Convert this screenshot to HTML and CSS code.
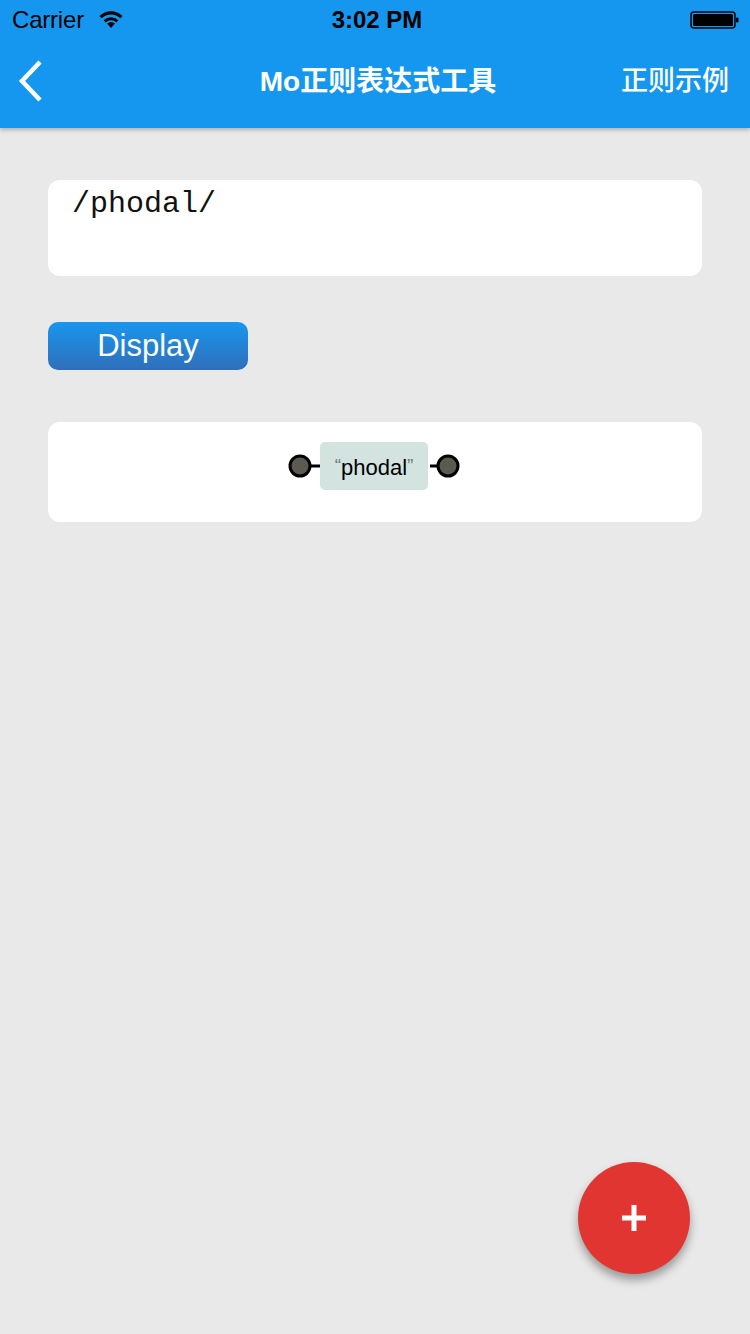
FILE: index.html
```html
<!DOCTYPE html>
<html>
<head>
<meta charset="utf-8">
<link rel="stylesheet" href="styles.css">
</head>
<body>
<div class="screen">
  <header class="topbar">
    <div class="status">
      <div class="status-left">
        <span class="carrier">Carrier</span>
        <svg class="wifi" width="26" height="20" viewBox="0 0 26 20">
          <path d="M13 19 L9 14.5 A6 6 0 0 1 17 14.5 Z" fill="#000"/>
          <path d="M5.6 11.2 A10.5 10.5 0 0 1 20.4 11.2 L18.3 13.4 A7.5 7.5 0 0 0 7.7 13.4 Z" fill="#000"/>
          <path d="M1.5 7 A16.5 16.5 0 0 1 24.5 7 L22.4 9.2 A13.5 13.5 0 0 0 3.6 9.2 Z" fill="#000"/>
        </svg>
      </div>
      <span class="time">3:02 PM</span>
      <div class="status-right">
        <svg width="50" height="20" viewBox="0 0 50 20">
          <rect x="1" y="2" width="44" height="16" rx="3" fill="none" stroke="#000" stroke-width="1.5"/>
          <rect x="3" y="4" width="40" height="12" rx="1.5" fill="#000"/>
          <rect x="46" y="7.5" width="2.5" height="5" rx="1" fill="#000"/>
        </svg>
      </div>
    </div>
    <nav class="navbar">
      <svg class="back" width="30" height="44" viewBox="0 0 30 44">
        <path d="M25 3 L7 22 L25 41" fill="none" stroke="#fff" stroke-width="4.5"/>
      </svg>
      <h1 class="title">Mo正则表达式工具</h1>
      <span class="action">正则示例</span>
    </nav>
  </header>

  <main class="content">
    <div class="input-card">/phodal/</div>
    <button class="display-btn">Display</button>
    <div class="diagram-card">
      <svg width="180" height="56" viewBox="0 0 180 56">
        <line x1="14" y1="24" x2="34" y2="24" stroke="#000" stroke-width="3"/>
        <line x1="142" y1="24" x2="164" y2="24" stroke="#000" stroke-width="3"/>
        <rect x="32" y="0" width="108" height="48" rx="5" fill="#d3e4e0"/>
        <circle cx="12" cy="24" r="10" fill="#5c5a50" stroke="#000" stroke-width="3"/>
        <circle cx="160" cy="24" r="10" fill="#5c5a50" stroke="#000" stroke-width="3"/>
        <text x="86" y="33" text-anchor="middle" font-family="Liberation Sans, Arial, sans-serif" font-size="22" fill="#000"><tspan fill="#777" font-size="19" dy="-3">“</tspan><tspan dy="3">phodal</tspan><tspan fill="#777" font-size="19" dy="-3">”</tspan></text>
      </svg>
    </div>
  </main>

  <button class="fab" aria-label="add">
    <svg width="28" height="28" viewBox="0 0 28 28">
      <rect x="11.5" y="1" width="5" height="26" fill="#fff"/>
      <rect x="2" y="11.5" width="24" height="5" fill="#fff"/>
    </svg>
  </button>
</div>
</body>
</html>
```

FILE: styles.css
```css
* { box-sizing: border-box; }
html, body { margin: 0; padding: 0; }
body {
  width: 750px;
  height: 1334px;
  background: #e9e9e9;
  font-family: "Liberation Sans", Arial, "Noto Sans CJK SC", sans-serif;
  overflow: hidden;
}
.screen {
  position: relative;
  width: 750px;
  height: 1334px;
}
.topbar {
  background: #1697ef;
  box-shadow: 0 2px 4px rgba(0,0,0,0.25);
  position: relative;
  z-index: 1;
}
.status {
  height: 40px;
  display: flex;
  align-items: center;
  justify-content: space-between;
  padding: 0 12px;
  color: #000;
  position: relative;
}
.status-left { display: flex; align-items: center; gap: 14px; width: 150px; }
.carrier { font-size: 24px; letter-spacing: -0.2px; }
.wifi { margin-top: -2px; }
.time {
  font-size: 24px;
  font-weight: bold;
  position: absolute;
  left: 0; right: 0;
  text-align: center;
  pointer-events: none;
  padding-left: 4px;
}
.status-right { width: 150px; display: flex; justify-content: flex-end; margin-right: -2px; }
.navbar {
  height: 88px;
  display: flex;
  align-items: center;
  justify-content: space-between;
  padding: 0 21px 6px 15px;
  position: relative;
  color: #fff;
}
.title {
  margin: 0;
  position: absolute;
  left: 0; right: 0;
  top: 0;
  line-height: 84px;
  text-align: center;
  font-size: 28px;
  font-weight: bold;
  font-family: "Liberation Sans", "Noto Sans CJK SC", sans-serif;
  padding-left: 6px;
}
.action {
  font-size: 27px;
  font-family: "Noto Sans CJK SC", sans-serif;
  font-weight: 500;
  margin-top: -6px;
}
.content {
  padding: 52px 48px 0 48px;
  display: flex;
  flex-direction: column;
  align-items: flex-start;
}
.input-card {
  width: 654px;
  height: 96px;
  background: #fff;
  border-radius: 12px;
  padding: 4px 24px;
  font-family: "Liberation Mono", "Courier New", monospace;
  font-size: 30px;
  line-height: 40px;
  color: #111;
}
.display-btn {
  margin-top: 46px;
  width: 200px;
  height: 48px;
  border: none;
  border-radius: 10px;
  background: linear-gradient(#1896ee, #2f6fba);
  color: #fff;
  font-family: "Liberation Sans", Arial, sans-serif;
  font-size: 31px;
  padding: 0;
  line-height: 48px;
}
.diagram-card {
  margin-top: 52px;
  width: 654px;
  height: 100px;
  background: #fff;
  border-radius: 12px;
  display: flex;
  justify-content: center;
  padding-top: 20px;
  padding-left: 6px;
}
.fab {
  position: absolute;
  left: 578px;
  top: 1162px;
  width: 112px;
  height: 112px;
  border-radius: 50%;
  border: none;
  background: #e03530;
  box-shadow: 0 6px 10px rgba(0,0,0,0.35);
  display: flex;
  align-items: center;
  justify-content: center;
  padding: 0;
}
```
